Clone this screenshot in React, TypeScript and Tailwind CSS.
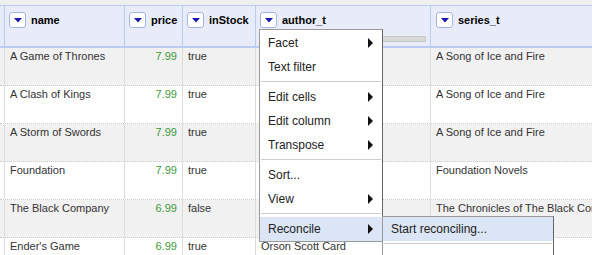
import React from "react";

const rows = [
  { name: "A Game of Thrones", price: "7.99", stock: "true", author: "", series: "A Song of Ice and Fire", gray: true },
  { name: "A Clash of Kings", price: "7.99", stock: "true", author: "", series: "A Song of Ice and Fire", gray: false },
  { name: "A Storm of Swords", price: "7.99", stock: "true", author: "", series: "A Song of Ice and Fire", gray: true },
  { name: "Foundation", price: "7.99", stock: "true", author: "", series: "Foundation Novels", gray: false },
  { name: "The Black Company", price: "6.99", stock: "false", author: "", series: "The Chronicles of The Black Company", gray: true },
  { name: "Ender's Game", price: "6.99", stock: "true", author: "Orson Scott Card", series: "", gray: false },
];

function DropButton() {
  return (
    <div className="flex h-[16px] w-[17px] shrink-0 items-center justify-center rounded-[3px] border border-[#a3b5e6] bg-white">
      <svg width="8" height="5" viewBox="0 0 8 5">
        <polygon points="0,0 8,0 4,4.5" fill="#1a1ab4" />
      </svg>
    </div>
  );
}

function HeaderCell({ label, w, bar }: { label: string; w: string; bar?: boolean }) {
  return (
    <div className={`${w} shrink-0 border-r border-[#bccbf2] pl-[4px] pt-[6px]`}>
      <div className="flex h-[16px] items-center gap-[5px]">
        <DropButton />
        <span className="text-[11px] font-bold leading-[16px] text-black">{label}</span>
      </div>
      {bar && <div className="mr-[4px] mt-[8px] h-[6px] border border-[#c6c6c6] bg-[#d9d9d9]" />}
    </div>
  );
}

function Arrow() {
  return (
    <svg width="5" height="10" viewBox="0 0 5 10">
      <polygon points="0,0 5,5 0,10" fill="#111" />
    </svg>
  );
}

function Item({ label, arrow, active }: { label: string; arrow?: boolean; active?: boolean }) {
  return (
    <div className={`flex h-[24px] items-center justify-between pl-[8px] pr-[9px] text-[12px] text-[#222] ${active ? "bg-[#dbe5f5]" : ""}`}>
      <span>{label}</span>
      {arrow && <Arrow />}
    </div>
  );
}

function Sep() {
  return (
    <div className="h-[6px] pt-[2px]">
      <div className="mx-[1px] h-px bg-[#cccccc]" />
    </div>
  );
}

export default function App() {
  return (
    <div className="relative h-[255px] w-[592px] overflow-hidden bg-white font-['Liberation_Sans',Arial,sans-serif]">
      <div className="h-[5px] bg-[#f0f0f0]" />
      <div className="flex h-[43px] border-b-2 border-t border-[#bccbf2] bg-[#e8ecf9]">
        <div className="w-[5px] shrink-0 border-r border-[#bccbf2]" />
        <HeaderCell label="name" w="w-[120px]" />
        <HeaderCell label="price" w="w-[58px]" />
        <HeaderCell label="inStock" w="w-[73px]" />
        <HeaderCell label="author_t" w="w-[175px]" bar />
        <div className="flex-1 pl-[5px] pt-[6px]">
          <div className="flex h-[16px] items-center gap-[5px]">
            <DropButton />
            <span className="text-[11px] font-bold leading-[16px] text-black">series_t</span>
          </div>
        </div>
      </div>
      {rows.map((r, i) => (
        <div
          key={i}
          className={`flex h-[38px] border-b border-dotted border-[#cccccc] text-[11px] leading-[13px] text-[#333] ${r.gray ? "bg-[#f1f1f1]" : "bg-white"}`}
        >
          <div className="w-[5px] shrink-0 border-r border-solid border-[#dcdcdc]" />
          <div className="w-[120px] shrink-0 overflow-hidden whitespace-nowrap border-r border-solid border-[#dcdcdc] pl-[5px] pt-[2px]">{r.name}</div>
          <div className="w-[58px] shrink-0 border-r border-solid border-[#dcdcdc] pr-[5px] pt-[2px] text-right text-[#3a9a3a]">{r.price}</div>
          <div className="w-[73px] shrink-0 border-r border-solid border-[#dcdcdc] pl-[5px] pt-[2px]">{r.stock}</div>
          <div className="w-[175px] shrink-0 overflow-hidden whitespace-nowrap border-r border-solid border-[#dcdcdc] pl-[5px] pt-[2px]">{r.author}</div>
          <div className="min-w-0 flex-1 overflow-hidden whitespace-nowrap pl-[5px] pt-[2px]">{r.series}</div>
        </div>
      ))}

      <div className="absolute left-[259px] top-[29px] w-[124px] border border-[#9a9a9a] border-r-[#666] bg-white pt-[1px]">
        <Item label="Facet" arrow />
        <Item label="Text filter" />
        <Sep />
        <Item label="Edit cells" arrow />
        <Item label="Edit column" arrow />
        <Item label="Transpose" arrow />
        <Sep />
        <Item label="Sort..." />
        <Item label="View" arrow />
        <Sep />
        <Item label="Reconcile" arrow active />
      </div>

      <div className="absolute left-[382px] top-[216px] h-[60px] w-[172px] border border-[#9a9a9a] border-r-[#666] bg-white">
        <Item label="Start reconciling..." active />
        <div className="mx-[1px] mt-[2px] h-px bg-[#cccccc]" />
      </div>
    </div>
  );
}
